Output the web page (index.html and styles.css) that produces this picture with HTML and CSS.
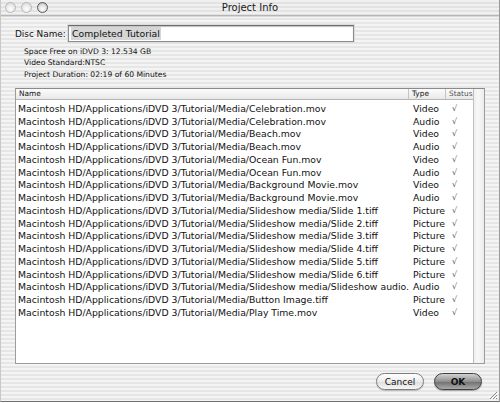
FILE: index.html
```html
<!DOCTYPE html>
<html>
<head>
<meta charset="utf-8">
<link rel="stylesheet" href="styles.css">
</head>
<body>
<div class="window">
  <div class="titlebar">
    <div class="lights">
      <span class="light"></span>
      <span class="light"></span>
      <span class="light dark"></span>
    </div>
    <div class="title">Project Info</div>
  </div>
  <div class="content">
    <div class="disc-row">
      <span class="label">Disc Name:</span>
      <div class="field"><span class="sel">Completed Tutorial</span></div>
    </div>
    <div class="info">
      <div>Space Free on iDVD 3: 12.534 GB</div>
      <div>Video Standard:NTSC</div>
      <div>Project Duration: 02:19 of 60 Minutes</div>
    </div>
    <div class="table">
      <div class="main">
        <div class="head">
          <div class="c-name">Name</div>
          <div class="c-type">Type</div>
          <div class="c-status">Status</div>
        </div>
        <div class="rows">
          <div class="row"><div class="c-name">Macintosh HD/Applications/iDVD 3/Tutorial/Media/Celebration.mov</div><div class="c-type">Video</div><div class="c-status">√</div></div>
          <div class="row"><div class="c-name">Macintosh HD/Applications/iDVD 3/Tutorial/Media/Celebration.mov</div><div class="c-type">Audio</div><div class="c-status">√</div></div>
          <div class="row"><div class="c-name">Macintosh HD/Applications/iDVD 3/Tutorial/Media/Beach.mov</div><div class="c-type">Video</div><div class="c-status">√</div></div>
          <div class="row"><div class="c-name">Macintosh HD/Applications/iDVD 3/Tutorial/Media/Beach.mov</div><div class="c-type">Audio</div><div class="c-status">√</div></div>
          <div class="row"><div class="c-name">Macintosh HD/Applications/iDVD 3/Tutorial/Media/Ocean Fun.mov</div><div class="c-type">Video</div><div class="c-status">√</div></div>
          <div class="row"><div class="c-name">Macintosh HD/Applications/iDVD 3/Tutorial/Media/Ocean Fun.mov</div><div class="c-type">Audio</div><div class="c-status">√</div></div>
          <div class="row"><div class="c-name">Macintosh HD/Applications/iDVD 3/Tutorial/Media/Background Movie.mov</div><div class="c-type">Video</div><div class="c-status">√</div></div>
          <div class="row"><div class="c-name">Macintosh HD/Applications/iDVD 3/Tutorial/Media/Background Movie.mov</div><div class="c-type">Audio</div><div class="c-status">√</div></div>
          <div class="row"><div class="c-name">Macintosh HD/Applications/iDVD 3/Tutorial/Media/Slideshow media/Slide 1.tiff</div><div class="c-type">Picture</div><div class="c-status">√</div></div>
          <div class="row"><div class="c-name">Macintosh HD/Applications/iDVD 3/Tutorial/Media/Slideshow media/Slide 2.tiff</div><div class="c-type">Picture</div><div class="c-status">√</div></div>
          <div class="row"><div class="c-name">Macintosh HD/Applications/iDVD 3/Tutorial/Media/Slideshow media/Slide 3.tiff</div><div class="c-type">Picture</div><div class="c-status">√</div></div>
          <div class="row"><div class="c-name">Macintosh HD/Applications/iDVD 3/Tutorial/Media/Slideshow media/Slide 4.tiff</div><div class="c-type">Picture</div><div class="c-status">√</div></div>
          <div class="row"><div class="c-name">Macintosh HD/Applications/iDVD 3/Tutorial/Media/Slideshow media/Slide 5.tiff</div><div class="c-type">Picture</div><div class="c-status">√</div></div>
          <div class="row"><div class="c-name">Macintosh HD/Applications/iDVD 3/Tutorial/Media/Slideshow media/Slide 6.tiff</div><div class="c-type">Picture</div><div class="c-status">√</div></div>
          <div class="row"><div class="c-name">Macintosh HD/Applications/iDVD 3/Tutorial/Media/Slideshow media/Slideshow audio.</div><div class="c-type">Audio</div><div class="c-status">√</div></div>
          <div class="row"><div class="c-name">Macintosh HD/Applications/iDVD 3/Tutorial/Media/Button Image.tiff</div><div class="c-type">Picture</div><div class="c-status">√</div></div>
          <div class="row"><div class="c-name">Macintosh HD/Applications/iDVD 3/Tutorial/Media/Play Time.mov</div><div class="c-type">Video</div><div class="c-status">√</div></div>
        </div>
      </div>
      <div class="scroll"></div>
    </div>
    <div class="buttons">
      <div class="btn cancel">Cancel</div>
      <div class="btn ok">OK</div>
    </div>
  </div>
  <svg class="grip" width="10" height="10" viewBox="0 0 10 10">
    <path d="M9 2 L2 9 M9 5 L5 9 M9 8 L8 9" stroke="#8a8a8a" stroke-width="1"/>
    <path d="M10 3 L3 10 M10 6 L6 10" stroke="#fff" stroke-width="1"/>
  </svg>
</div>
</body>
</html>
```

FILE: styles.css
```css
html, body {
  margin: 0;
  padding: 0;
  background: #ffffff;
}
.window {
  position: relative;
  width: 498px;
  height: 401px;
  border-right: 1px solid #9a9a9a;
  border-bottom: 1px solid #6f6f6f;
  border-left: 1px solid #c8c8c8;
  background: repeating-linear-gradient(to bottom, #f4f4f4 0px, #f4f4f4 2px, #e6e6e6 2px, #e6e6e6 4px);
  font-family: "DejaVu Sans", sans-serif;
  color: #111;
  overflow: hidden;
}
.titlebar {
  height: 15px;
  display: flex;
  align-items: center;
  position: relative;
  background: repeating-linear-gradient(to bottom, #f0f0f0 0px, #f0f0f0 2px, #e2e2e2 2px, #e2e2e2 4px);
  border-bottom: 1px solid #b5b5b5;
  box-shadow: 0 1px 0 #d8d8d8;
}
.lights {
  display: flex;
  gap: 5px;
  padding-left: 4px;
  position: relative;
  z-index: 1;
}
.light {
  width: 11px;
  height: 11px;
  border-radius: 50%;
  box-sizing: border-box;
  border: 1px solid #b8b8b8;
  background: radial-gradient(circle at 50% 65%, #ffffff 0%, #e6e6e6 60%, #cfcfcf 100%);
}
.light.dark {
  border: 1.5px solid #5a5a5a;
  background: radial-gradient(circle at 50% 65%, #ffffff 0%, #d8d8d8 60%, #9a9a9a 100%);
}
.title {
  position: absolute;
  left: 0;
  right: 0;
  top: 0;
  height: 15px;
  line-height: 15px;
  text-align: center;
  font-size: 10px;
  color: #1a1a1a;
}
.content {
  padding: 9px 0 0 14px;
}
.disc-row {
  display: flex;
  align-items: center;
  height: 17px;
}
.label {
  font-size: 8.9px;
  width: 53px;
  flex-shrink: 0;
  white-space: nowrap;
}
.field {
  width: 282px;
  height: 15px;
  background: #fff;
  border: 1px solid #8c8c8c;
  border-top-color: #6c6c6c;
  box-shadow: inset 0 1px 1px rgba(0,0,0,0.25), 0 0 0 1px #dcdcdc;
  display: flex;
  align-items: center;
  padding-left: 2px;
  font-size: 9.3px;
}
.sel {
  background: #d6d6d6;
  padding: 0 1px;
  line-height: 13px;
}
.info {
  padding: 4px 0 0 9px;
  font-size: 7.6px;
  line-height: 11.3px;
}
.table {
  margin-top: 8px;
  width: 470px;
  height: 276px;
  border: 1px solid #9c9c9c;
  border-top-color: #8a8a8a;
  display: flex;
  box-sizing: border-box;
  background: #fff;
}
.main {
  flex: 1;
  display: flex;
  flex-direction: column;
}
.head {
  display: flex;
  height: 10px;
  background: linear-gradient(to bottom, #fbfbfb, #e9e9e9);
  border-bottom: 1px solid #b4b4b4;
  font-size: 7.4px;
  line-height: 10px;
}
.head .c-name, .head .c-type {
  border-right: 1px solid #c4c4c4;
}
.head .c-name { padding-left: 3px; }
.head .c-type { padding-left: 3px; }
.head .c-status { padding-left: 3px; }
.c-name {
  width: 393px;
  box-sizing: border-box;
  padding-left: 2px;
  white-space: nowrap;
  overflow: hidden;
}
.c-type {
  width: 37px;
  box-sizing: border-box;
  padding-left: 4px;
}
.c-status {
  flex: 1;
  padding-left: 6px;
  color: #555;
}
.rows {
  padding-top: 3px;
  font-size: 9.3px;
}
.row {
  display: flex;
  height: 12.75px;
  line-height: 12.75px;
}
.row .c-status {
  font-size: 8px;
}
.scroll {
  width: 10px;
  border-left: 1px solid #c0c0c0;
  background: linear-gradient(to right, #eeeeee, #f8f8f8 40%, #ececec);
  border-top: 0;
}
.buttons {
  display: flex;
  justify-content: flex-end;
  gap: 10px;
  padding: 9px 17px 0 0;
}
.btn {
  height: 17px;
  line-height: 17px;
  border-radius: 9px;
  text-align: center;
  font-size: 9px;
  box-sizing: border-box;
}
.cancel {
  width: 48px;
  border: 1px solid #7d7d7d;
  background: linear-gradient(to bottom, #ffffff 0%, #ececec 50%, #dedede 51%, #f6f6f6 100%);
  box-shadow: 0 1px 1px rgba(0,0,0,0.2);
}
.ok {
  width: 48px;
  border: 1px solid #3f3f3f;
  background: linear-gradient(to bottom, #d2d2d2 0%, #8f8f8f 50%, #6e6e6e 51%, #a9a9a9 100%);
  box-shadow: 0 1px 1px rgba(0,0,0,0.3);
  color: #111;
  font-weight: bold;
}
.grip {
  position: absolute;
  right: 1px;
  bottom: 1px;
}
```
